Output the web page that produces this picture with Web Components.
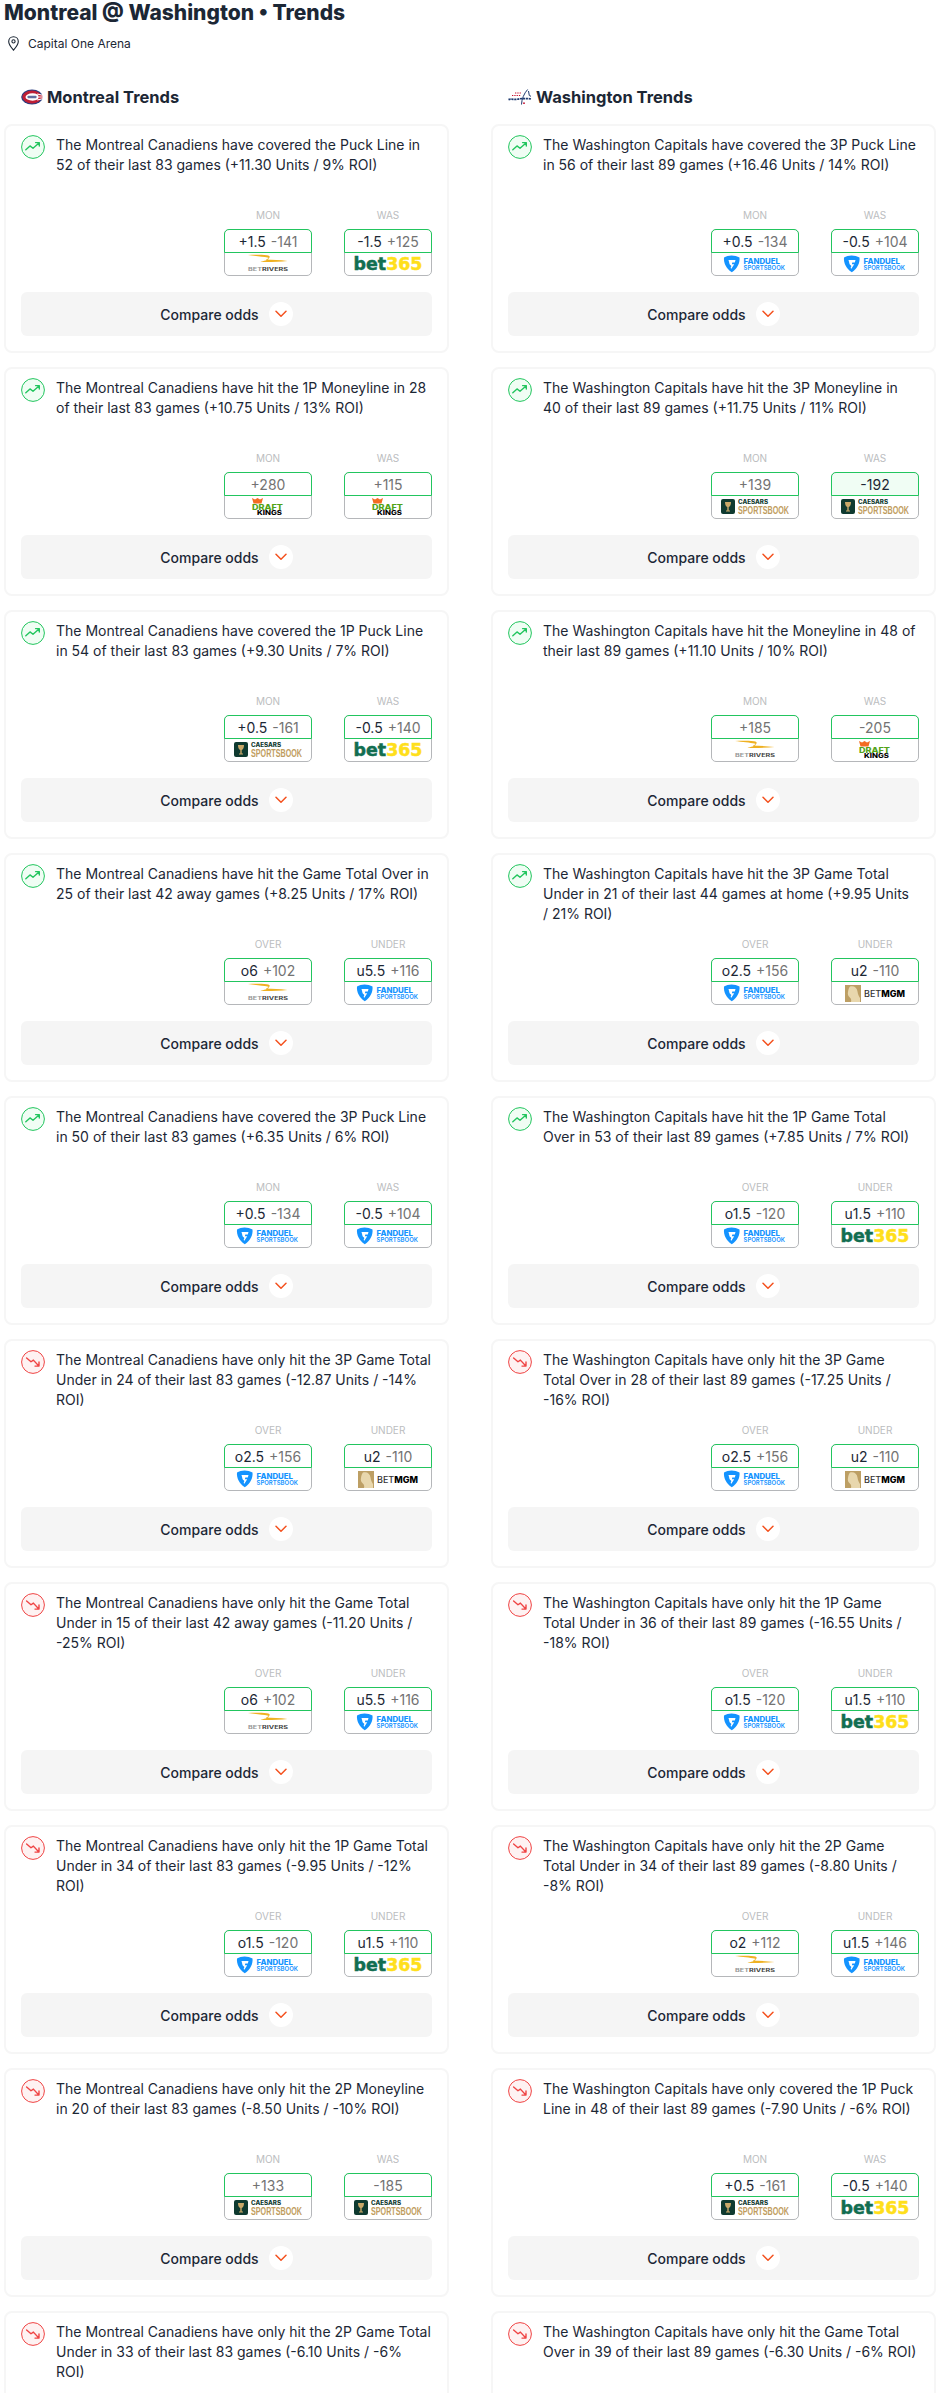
<!DOCTYPE html>
<html><head><meta charset="utf-8"><title>Montreal @ Washington Trends</title>
<style>html,body{margin:0;padding:0;background:#fff}body{height:2393px;overflow:hidden;font-family:Inter,"Liberation Sans",sans-serif;color:#1c2735}</style>
</head><body><trends-page></trends-page>
<script>
const BOOK={
fd:`<svg width="62" height="18" viewBox="0 0 62 18"><path d="M0 2.500C4-.2 11-.2 15.500 2.500c.5 5.500-1.800 10.500-7.700 14.800C1.800 13 -.5 8 0 2.500z" fill="#1493ff"/><path d="M4.500 5h7l-.7 2.500H8.300l-.4 1.800h2.300l-2.800 4.500-.8-.7.8-2.100-1.800-1.700z" fill="#fff"/><text x="19.500" y="8.700" font-family="Inter,sans-serif" font-size="7.500" font-weight="800" fill="#1493ff" textLength="36.500" lengthAdjust="spacingAndGlyphs">FANDUEL</text><text x="19.500" y="15" font-family="Inter,sans-serif" font-size="6" font-weight="600" fill="#1493ff" textLength="41.500" lengthAdjust="spacingAndGlyphs">SPORTSBOOK</text></svg>`,
b365:`<svg width="70" height="20" viewBox="0 0 70 20"><text x="0.500" y="16" font-family="'DejaVu Sans',sans-serif" font-size="17.500" font-weight="700" stroke-width=".5" textLength="69" lengthAdjust="spacingAndGlyphs"><tspan fill="#126e51" stroke="#126e51">bet</tspan><tspan fill="#ffdf1b" stroke="#ffdf1b">365</tspan></text></svg>`,
riv:`<svg width="40" height="18" viewBox="0 0 40 18"><path d="M0 0c6-.3 13-.3 19 .3 2 .3 3 .9 2.600 1.900-.3.900-2 1.700-4 2.400 7 .1 14 .5 21.900 1.400-8 .8-18 1.100-27 .9 3-1 7.500-2.100 8.500-3.200.3-.5-.3-.9-1.500-1.200C15.500 1.700 7 .9 0 0z" fill="#efb122"/><text x="20" y="15.500" text-anchor="middle" font-family="Inter,sans-serif" font-size="4.600" font-weight="700" fill="#444" textLength="40" lengthAdjust="spacingAndGlyphs"><tspan fill="#999">BET</tspan>RIVERS</text></svg>`,
dk:`<svg width="32" height="18" viewBox="0 0 32 18"><path d="M0 0l3 1.500L5.500 0 8 1.500 11 0 9.500 5.500h-8z" fill="#f46c22"/><text x="0" y="11.500" font-family="Inter,sans-serif" font-size="7.500" font-weight="800" fill="#53a318" textLength="31" lengthAdjust="spacingAndGlyphs">DRAFT</text><text x="5" y="16.500" font-family="Inter,sans-serif" font-size="6" font-weight="800" fill="#000" textLength="25" lengthAdjust="spacingAndGlyphs">KINGS</text></svg>`,
cz:`<svg width="68" height="18" viewBox="0 0 68 18"><rect x="0" y="1" width="14" height="15" rx="2" fill="#0f3a30"/><path d="M4 4h6c0 3-1 4.500-2.300 5v3.500H9v1H5v-1h1.300V9C5 8.500 4 7 4 4z" fill="#c9a869"/><text x="17" y="6.300" font-family="Inter,sans-serif" font-size="5.600" font-weight="800" fill="#0f3a30" textLength="30" lengthAdjust="spacingAndGlyphs">CAESARS</text><text x="17" y="15.500" font-family="'Liberation Sans',sans-serif" font-size="10" font-weight="700" fill="#bf9d5e" textLength="51" lengthAdjust="spacingAndGlyphs">SPORTSBOOK</text></svg>`,
mgm:`<svg width="60" height="17" viewBox="0 0 60 17"><rect x="0" y="0" width="16" height="17" fill="#bd9f64"/><path d="M5 1.500c4-1 7 1 7.500 5 .3 3 1.500 5 2.500 6.500V17H6c.6-2 0-3.500-1.200-4.500C3 11 2.500 9 3 7c.3-2.500 1-4.500 2-5.500z" fill="#e8d7ad"/><text x="19" y="11.700" font-family="Inter,sans-serif" font-size="8.500" font-weight="500" fill="#333" textLength="41" lengthAdjust="spacingAndGlyphs">BET<tspan font-weight="800" fill="#000">MGM</tspan></text></svg>`};
const UP=`<svg width="24" height="24" viewBox="0 0 24 24"><circle cx="12" cy="12" r="11.400" fill="#f0fdf4" stroke="#22c55e" stroke-width="1"/><path d="M4.800 14.800l4.200-3.900 3 2.300 6-5.300M14.600 7.600h3.700v3.400" fill="none" stroke="#22c55e" stroke-width="1.400" stroke-linecap="round" stroke-linejoin="round"/></svg>`;
const DOWN=`<svg width="24" height="24" viewBox="0 0 24 24"><circle cx="12" cy="12" r="11.400" fill="#fef2f2" stroke="#ef4444" stroke-width="1"/><path d="M5.600 8l4.400 3.800 2.400-1.700 5.200 5.700M18 11.900v4.200h-4" fill="none" stroke="#ef4444" stroke-width="1.400" stroke-linecap="round" stroke-linejoin="round"/></svg>`;

customElements.define('odds-box',class extends HTMLElement{
connectedCallback(){const r=this.attachShadow({mode:'open'});const[l,a,b,k,hi]=JSON.parse(this.dataset.o);
r.innerHTML=`<style>:host{display:flex;flex-direction:column;align-items:center;width:88px}
.h{font-size:10px;line-height:14px;color:#bbbdc0;height:14px;margin-bottom:7px;white-space:nowrap}
.box{width:88px;box-sizing:border-box;border:1px solid #b5b7ba;border-radius:5px;height:47px;display:flex;flex-direction:column}
.t{box-sizing:border-box;height:24px;margin:-1px -1px 0;border:1px solid #22c55e;border-radius:5px 5px 0 0;display:flex;align-items:center;justify-content:center;gap:5px;font-size:14px;background:${hi?'#f0fdf4':'#fff'}}
.l{color:#1c2735}.o{color:${hi?'#1c2735':'#737373'}}
.b{flex:1;display:flex;align-items:center;justify-content:center}svg{display:block;overflow:visible}</style>
<div class="h">${l}</div><div class="box"><div class="t">${a?`<span class="l">${a}</span>`:''}<span class="o">${b}</span></div><div class="b">${BOOK[k]}</div></div>`;}});

customElements.define('compare-bar',class extends HTMLElement{
connectedCallback(){this.attachShadow({mode:'open'}).innerHTML=`<style>:host{display:flex;flex:none;height:44px;border-radius:6px;background:#f5f5f5;align-items:center;justify-content:center;gap:10px;font-size:14px;font-weight:450;color:#1c2735}
.c{width:24px;height:24px;border-radius:50%;background:#fff;display:flex;align-items:center;justify-content:center}</style>
<span>Compare odds</span><span class="c"><svg width="12" height="8" viewBox="0 0 12 8"><path d="M1 1.200l5 5 5-5" fill="none" stroke="#f4511e" stroke-width="1.500" stroke-linecap="round" stroke-linejoin="round"/></svg></span>`;}});

customElements.define('trend-card',class extends HTMLElement{
connectedCallback(){const r=this.attachShadow({mode:'open'});const last=this.dataset.l==='1';const w=this.dataset.n==='1'?'372.5px':'376px';
r.innerHTML=`<style>:host{display:flex;flex-direction:column;box-sizing:border-box;height:229px;border:2px solid #f6f6f6;border-radius:8px;padding:9px 15px 15px}
.top{display:flex;gap:11px;flex:1}.i{flex:none;width:24px;height:24px}p{margin:0;width:${w};font-size:14px;line-height:20px;color:#1c2735}
.odds{display:flex;justify-content:flex-end;gap:32px;margin-bottom:16px}</style>
<div class="top"><div class="i">${this.dataset.d==='1'?DOWN:UP}</div><p><slot></slot></p></div>
${last?'':'<div class="odds"><slot name="odds"></slot></div><compare-bar></compare-bar>'}`;}});

customElements.define('team-col',class extends HTMLElement{
connectedCallback(){const r=this.attachShadow({mode:'open'});
r.innerHTML=`<style>:host{display:flex;flex-direction:column;min-width:0}
.h{display:flex;align-items:center;gap:4px;height:24px;margin:0 0 15px 17px;font-size:16.500px;font-weight:700;color:#1c2735}
.c{display:flex;flex-direction:column;gap:14px}</style>
<div class="h"><slot name="logo"></slot><span>${this.dataset.t}</span></div><div class="c"><slot></slot></div>`;}});

customElements.define('trends-page',class extends HTMLElement{
connectedCallback(){const r=this.attachShadow({mode:'open'});
const M='The Montreal Canadiens have ',W='The Washington Capitals have ';
const mw=['MON','WAS'],ou=['OVER','UNDER'];
const L=[
[0,'covered the Puck Line in 52 of their last 83 games (+11.30 Units / 9% ROI)',mw,['+1.5','-141','riv'],['-1.5','+125','b365']],
[0,'hit the 1P Moneyline in 28 of their last 83 games (+10.75 Units / 13% ROI)',mw,['','+280','dk'],['','+115','dk']],
[0,'covered the 1P Puck Line in 54 of their last 83 games (+9.30 Units / 7% ROI)',mw,['+0.5','-161','cz'],['-0.5','+140','b365']],
[0,'hit the Game Total Over in 25 of their last 42 away games (+8.25 Units / 17% ROI)',ou,['o6','+102','riv'],['u5.5','+116','fd']],
[0,'covered the 3P Puck Line in 50 of their last 83 games (+6.35 Units / 6% ROI)',mw,['+0.5','-134','fd'],['-0.5','+104','fd']],
[1,'only hit the 3P Game Total Under in 24 of their last 83 games (-12.87 Units / -14% ROI)',ou,['o2.5','+156','fd'],['u2','-110','mgm']],
[1,'only hit the Game Total Under in 15 of their last 42 away games (-11.20 Units / -25% ROI)',ou,['o6','+102','riv'],['u5.5','+116','fd']],
[1,'only hit the 1P Game Total Under in 34 of their last 83 games (-9.95 Units / -12% ROI)',ou,['o1.5','-120','fd'],['u1.5','+110','b365']],
[1,'only hit the 2P Moneyline in 20 of their last 83 games (-8.50 Units / -10% ROI)',mw,['','+133','cz'],['','-185','cz']],
[1,'only hit the 2P Game Total Under in 33 of their last 83 games (-6.10 Units / -6% ROI)']];
const R=[
[0,'covered the 3P Puck Line in 56 of their last 89 games (+16.46 Units / 14% ROI)',mw,['+0.5','-134','fd'],['-0.5','+104','fd']],
[0,'hit the 3P Moneyline in 40 of their last 89 games (+11.75 Units / 11% ROI)',mw,['','+139','cz'],['','-192','cz',1]],
[0,'hit the Moneyline in 48 of their last 89 games (+11.10 Units / 10% ROI)',mw,['','+185','riv'],['','-205','dk']],
[0,'hit the 3P Game Total Under in 21 of their last 44 games at home (+9.95 Units / 21% ROI)',ou,['o2.5','+156','fd'],['u2','-110','mgm'],1],
[0,'hit the 1P Game Total Over in 53 of their last 89 games (+7.85 Units / 7% ROI)',ou,['o1.5','-120','fd'],['u1.5','+110','b365']],
[1,'only hit the 3P Game Total Over in 28 of their last 89 games (-17.25 Units / -16% ROI)',ou,['o2.5','+156','fd'],['u2','-110','mgm']],
[1,'only hit the 1P Game Total Under in 36 of their last 89 games (-16.55 Units / -18% ROI)',ou,['o1.5','-120','fd'],['u1.5','+110','b365'],1],
[1,'only hit the 2P Game Total Under in 34 of their last 89 games (-8.80 Units / -8% ROI)',ou,['o2','+112','riv'],['u1.5','+146','fd']],
[1,'only covered the 1P Puck Line in 48 of their last 89 games (-7.90 Units / -6% ROI)',mw,['+0.5','-161','cz'],['-0.5','+140','b365']],
[1,'only hit the Game Total Over in 39 of their last 89 games (-6.30 Units / -6% ROI)']];
const card=(p,x)=>`<trend-card data-d="${x[0]}" data-l="${x[2]?0:1}" data-n="${x[5]?1:0}">${p}${x[1]}`+(x[2]?[0,1].map(i=>`<odds-box slot="odds" data-o='${JSON.stringify([x[2][i],x[3+i][0],x[3+i][1],x[3+i][2],x[3+i][3]||0])}'></odds-box>`).join(''):'')+`</trend-card>`;
const hab=`<svg slot="logo" width="22" height="16" viewBox="0 0 22 16"><ellipse cx="11" cy="8" rx="10.800" ry="7.600" fill="#2c3e80"/><ellipse cx="11" cy="8" rx="9.600" ry="6.500" fill="#bf1e35"/><ellipse cx="11.500" cy="8" rx="7" ry="3.700" fill="#fff"/><path d="M16 4.500l6 1.300v4.400l-6 1.300 2-3.500z" fill="#fff"/><path d="M17 5.700l4.500 1v.7h-4z M17 10.300l4.500-1v-.7h-4z" fill="#bf1e35"/><rect x="6.500" y="6.700" width="9" height="2.600" rx=".8" fill="#2c3e80" opacity=".75"/></svg>`;
const caps=`<svg slot="logo" width="24" height="16" viewBox="0 0 24 16"><path d="M.5 10.600c3-1.300 6 .5 9-.4 3-.8 6-.7 9-.6 1.500 0 3.500 0 5 .6" fill="none" stroke="#1f3a70" stroke-width="1.700" stroke-dasharray="2.200 .7"/><path d="M13.500 15.500c.2-5.500 2.500-11 6.100-15M20.500 2l.8 4.500 1.700.8" fill="none" stroke="#1f3a70" stroke-width="1"/><path d="M4 6.500h9M7 4h6" stroke="#c8102e" stroke-width="1.100" stroke-dasharray="1.300 1"/><circle cx="16" cy="14.200" r=".9" fill="#c8102e"/></svg>`;
r.innerHTML=`<style>:host{display:block;width:941px;height:2393px;overflow:hidden}
h1{margin:0 0 0 4px;height:26px;font-size:21px;line-height:26px;font-weight:800;color:#1c2735;white-space:nowrap}
.v{display:flex;align-items:center;gap:9px;margin:8px 0 0 8px;height:18px;font-size:12px;color:#1c2735}
.g{display:grid;grid-template-columns:445px 445px;column-gap:42px;margin:33px 0 0 4px}</style>
<h1>Montreal @ Washington • Trends</h1>
<div class="v"><svg width="11" height="15" viewBox="0 0 11 15"><path d="M5.500.7C2.700.7.700 2.800.700 5.500c0 3.300 3 6.500 4.800 8.700 1.800-2.200 4.800-5.400 4.800-8.700C10.300 2.800 8.300.7 5.500.7z" fill="none" stroke="#1c2735" stroke-width="1.100"/><circle cx="5.500" cy="5.400" r="1.600" fill="none" stroke="#1c2735" stroke-width="1.100"/></svg><span>Capital One Arena</span></div>
<div class="g"><team-col data-t="Montreal Trends">${hab}${L.map(x=>card(M,x)).join('')}</team-col><team-col data-t="Washington Trends">${caps}${R.map(x=>card(W,x)).join('')}</team-col></div>`;}});
</script></body></html>
